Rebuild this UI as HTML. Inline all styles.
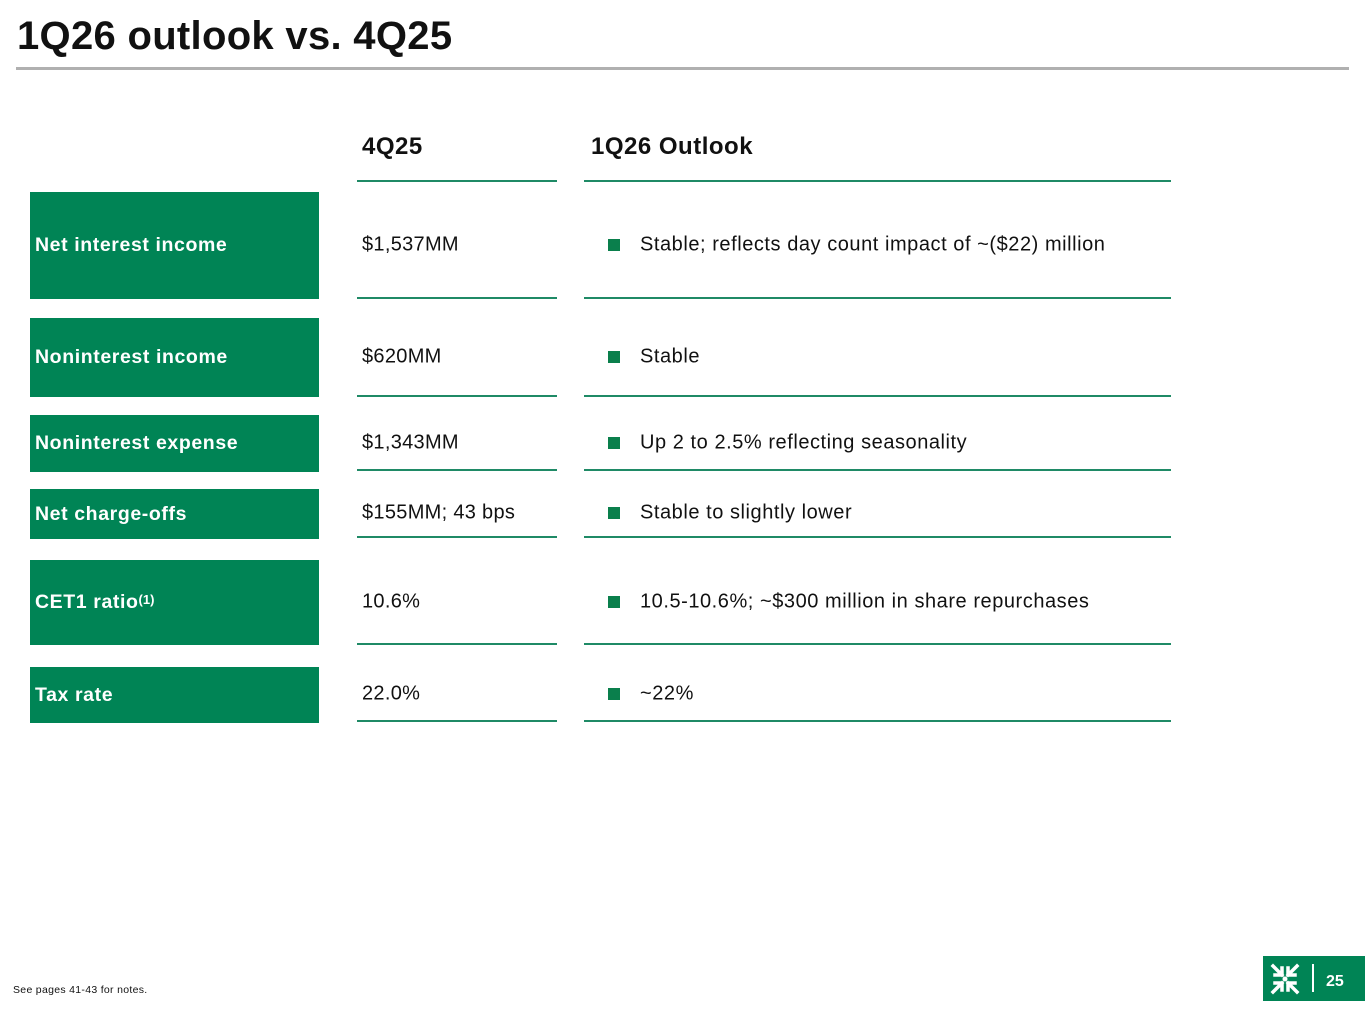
<!DOCTYPE html>
<html><head><meta charset="utf-8"><style>
*{margin:0;padding:0;box-sizing:border-box}
body{width:1365px;height:1024px;background:#fff;position:relative;overflow:hidden;font-family:"Liberation Sans",sans-serif;color:#111}
.t{position:absolute;left:17px;top:14px;font-size:40px;font-weight:bold;letter-spacing:0.3px}
.rule{position:absolute;left:16px;top:67px;width:1333px;height:3px;background:#b0b0b0}
.h{position:absolute;top:133px;font-size:24px;font-weight:bold;letter-spacing:0.5px}
.ln{position:absolute;height:2px;background:#1f8a66}
.box{position:absolute;left:30px;width:289px;background:#008455;color:#fff;font-weight:bold;font-size:19.5px;letter-spacing:0.6px;display:flex;align-items:center;padding-left:5px}
.v{position:absolute;left:362px;font-size:20px;letter-spacing:0.3px;transform:translateY(-50%)}
.o{position:absolute;left:640px;font-size:20px;letter-spacing:0.55px;transform:translateY(-50%)}
.b{position:absolute;left:608px;width:12px;height:12px;background:#0a7f4c;transform:translateY(-50%)}
sup{font-size:13px;vertical-align:top;position:relative;top:-3px;letter-spacing:0}
</style></head><body>
<div class="t">1Q26 outlook vs. 4Q25</div>
<div class="rule"></div>
<div class="h" style="left:362px">4Q25</div>
<div class="h" style="left:591px">1Q26 Outlook</div>

<div class="ln" style="left:357px;width:200px;top:180px"></div><div class="ln" style="left:584px;width:587px;top:180px"></div>
<div class="ln" style="left:357px;width:200px;top:297px"></div><div class="ln" style="left:584px;width:587px;top:297px"></div>
<div class="ln" style="left:357px;width:200px;top:395px"></div><div class="ln" style="left:584px;width:587px;top:395px"></div>
<div class="ln" style="left:357px;width:200px;top:469px"></div><div class="ln" style="left:584px;width:587px;top:469px"></div>
<div class="ln" style="left:357px;width:200px;top:536px"></div><div class="ln" style="left:584px;width:587px;top:536px"></div>
<div class="ln" style="left:357px;width:200px;top:643px"></div><div class="ln" style="left:584px;width:587px;top:643px"></div>
<div class="ln" style="left:357px;width:200px;top:720px"></div><div class="ln" style="left:584px;width:587px;top:720px"></div>

<div class="box" style="top:192px;height:107px">Net interest income</div>
<div class="box" style="top:318px;height:79px">Noninterest income</div>
<div class="box" style="top:415px;height:57px">Noninterest expense</div>
<div class="box" style="top:489px;height:50px">Net charge-offs</div>
<div class="box" style="top:560px;height:85px">CET1 ratio<sup>(1)</sup></div>
<div class="box" style="top:667px;height:56px">Tax rate</div>

<div class="v" style="top:245px">$1,537MM</div><div class="b" style="top:245px"></div><div class="o" style="top:245px">Stable; reflects day count impact of ~($22) million</div>
<div class="v" style="top:357px">$620MM</div><div class="b" style="top:357px"></div><div class="o" style="top:357px">Stable</div>
<div class="v" style="top:443px">$1,343MM</div><div class="b" style="top:443px"></div><div class="o" style="top:443px">Up 2 to 2.5% reflecting seasonality</div>
<div class="v" style="top:513px">$155MM; 43 bps</div><div class="b" style="top:513px"></div><div class="o" style="top:513px">Stable to slightly lower</div>
<div class="v" style="top:602px">10.6%</div><div class="b" style="top:602px"></div><div class="o" style="top:602px">10.5-10.6%; ~$300 million in share repurchases</div>
<div class="v" style="top:694px">22.0%</div><div class="b" style="top:694px"></div><div class="o" style="top:694px">~22%</div>

<div style="position:absolute;left:13px;top:984px;font-size:10.5px;letter-spacing:0.3px">See pages 41-43 for notes.</div>
<div style="position:absolute;left:1263px;top:956px;width:102px;height:45px;background:#008455">
<svg width="102" height="45" style="position:absolute;left:0;top:0">
<g stroke="#fff" stroke-width="3.5" fill="none" stroke-linecap="square">
<path d="M10 10 L19 19 M12 19 H19 V12"/>
<path d="M34 10 L25 19 M32 19 H25 V12"/>
<path d="M10 36 L19 27 M12 27 H19 V34"/>
<path d="M34 36 L25 27 M32 27 H25 V34"/>
</g>
<circle cx="22" cy="23" r="2.5" fill="#fff"/>
<rect x="49" y="8" width="2" height="28" fill="#fff"/>
<text x="63" y="30" fill="#fff" font-family="Liberation Sans" font-weight="bold" font-size="16">25</text>
</svg></div>
</body></html>
